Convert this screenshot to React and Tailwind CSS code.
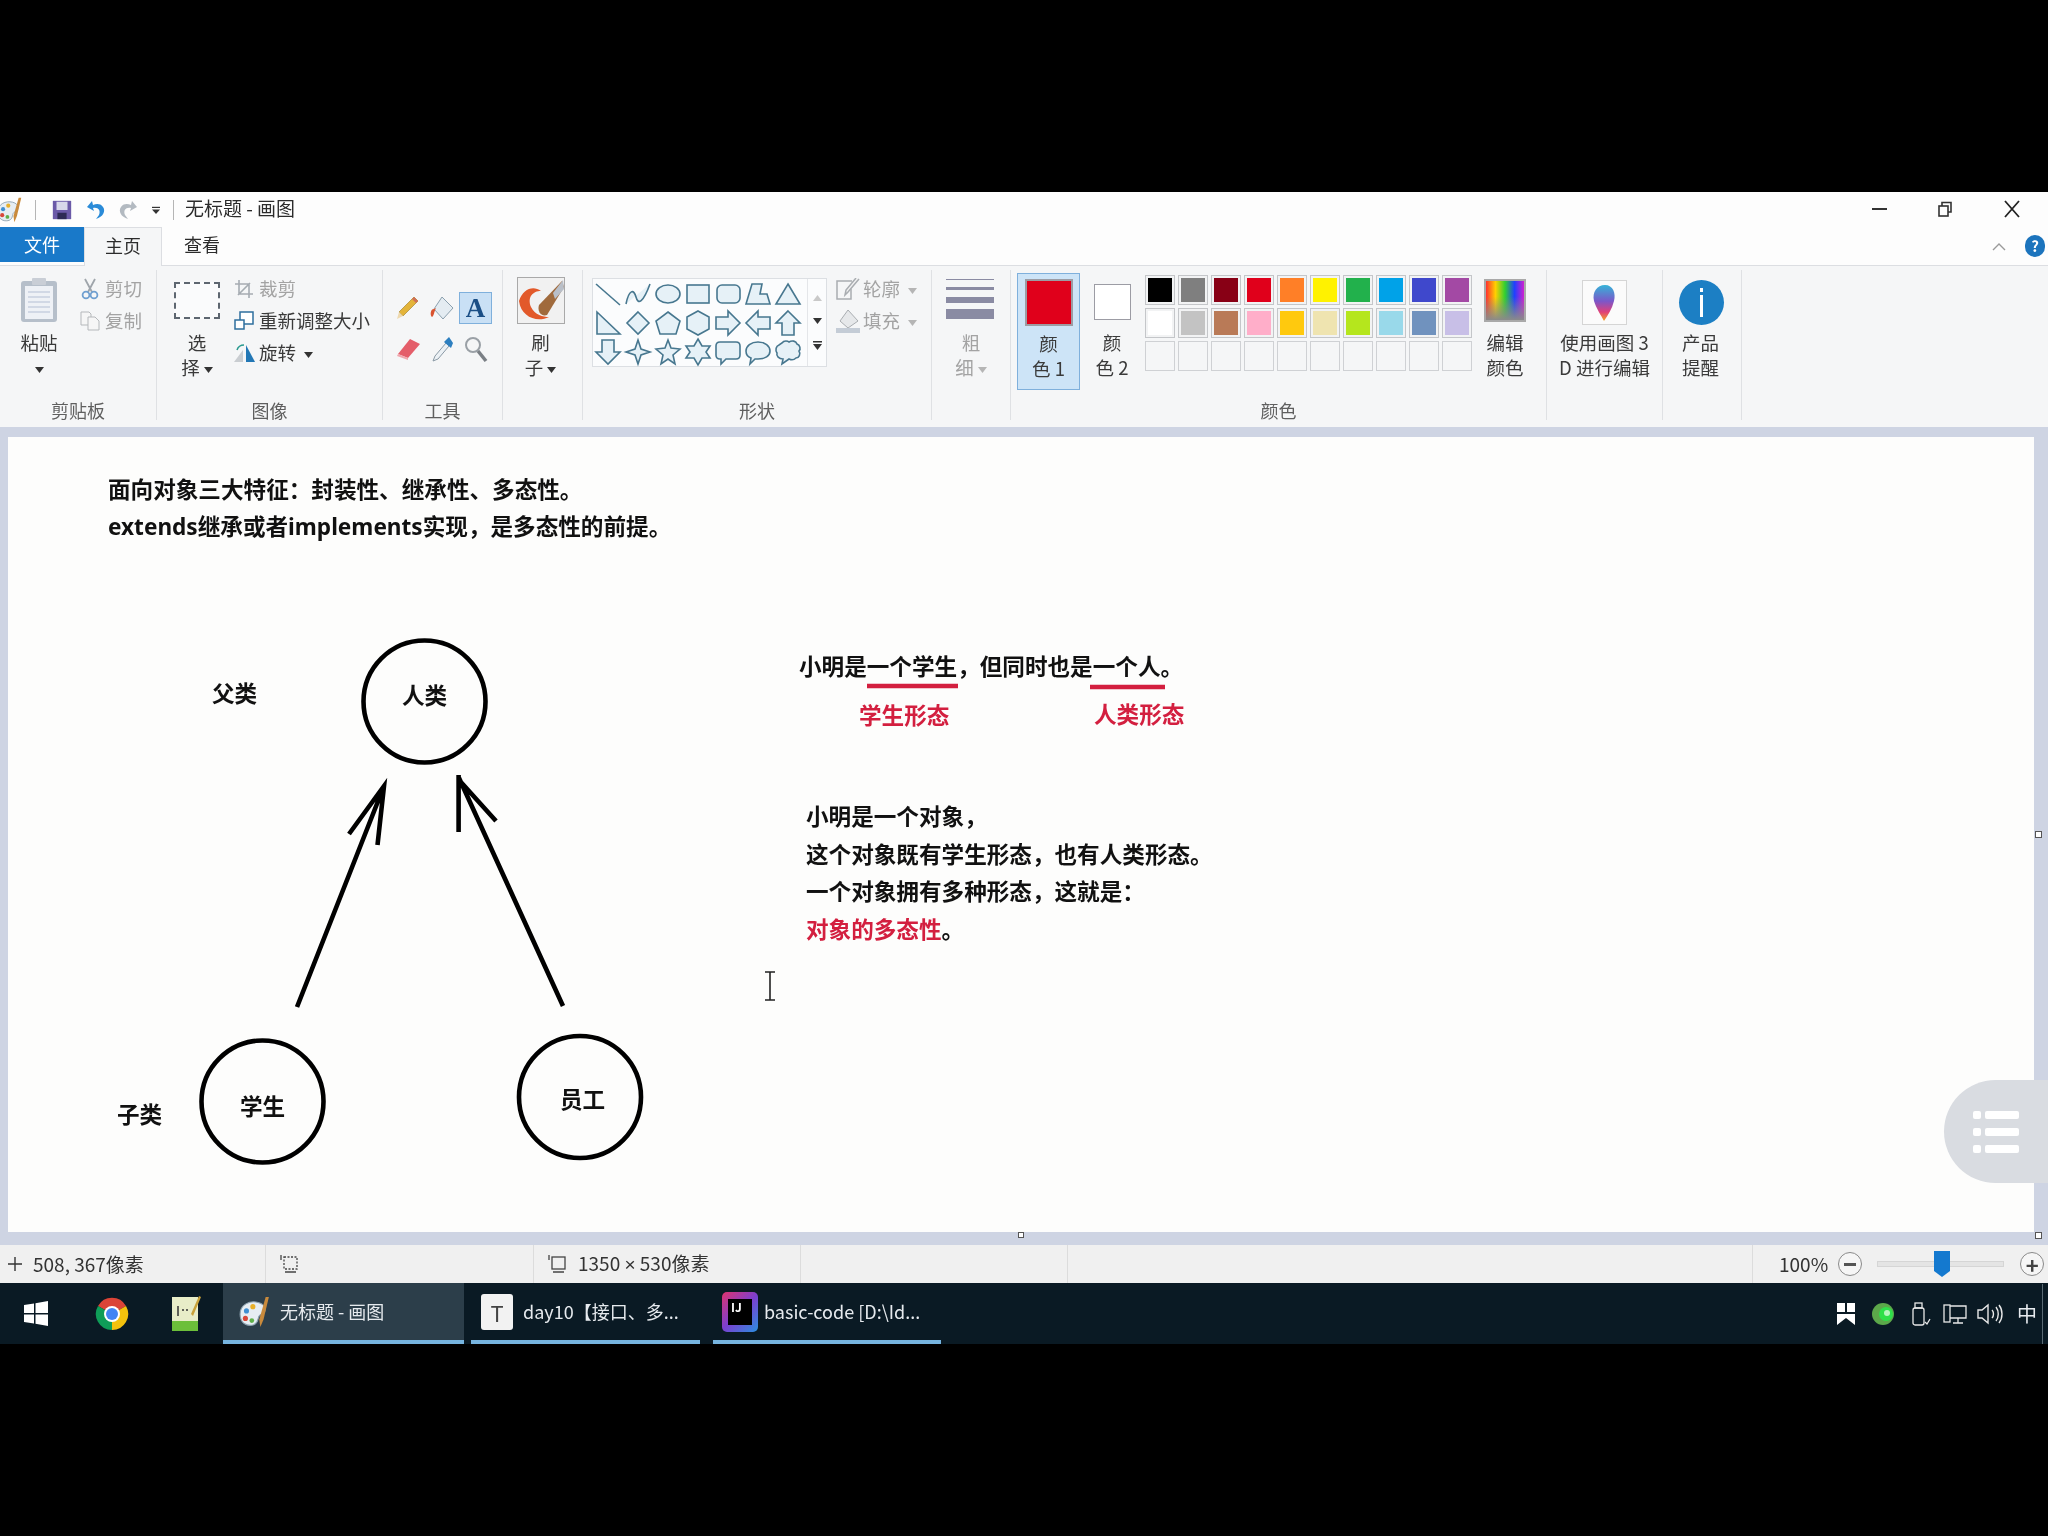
import React from 'react';

const CJK = { fontFamily: '"Noto Sans CJK SC", "Noto Sans", sans-serif' };

const PALETTE = [
  '#000000', '#7f7f7f', '#880015', '#e0001b', '#ff7f27', '#fff200', '#22b14c', '#00a2e8', '#3f48cc', '#a349a4',
  '#ffffff', '#c3c3c3', '#b97a57', '#ffaec9', '#ffc90e', '#efe4b0', '#b5e61d', '#99d9ea', '#7092be', '#c8bfe7',
];

// gallery shapes, each in a 30x30 box
const SHAPES = [
  <path d="M3 5 L27 26" />,
  <path d="M3 25 C6 10 11 10 13 18 C15 26 20 24 27 5" />,
  <ellipse cx="15" cy="15" rx="12" ry="9" />,
  <rect x="4" y="6" width="22" height="18" />,
  <rect x="4" y="6" width="23" height="18" rx="5" />,
  <path d="M3 25 L9 5 H19 L17 15 H24 L27 25 Z" />,
  <path d="M15 5 L27 25 H3 Z" />,
  <path d="M4 4 V26 H27 Z" />,
  <path d="M15 4 L26 15 L15 26 L4 15 Z" />,
  <path d="M15 4 L27 13 L23 26 H7 L3 13 Z" />,
  <path d="M15 3 L26 9 V21 L15 27 L4 21 V9 Z" />,
  <path d="M3 9 H15 V3 L27 15 L15 27 V21 H3 Z" />,
  <path d="M27 9 H15 V3 L3 15 L15 27 V21 H27 Z" />,
  <path d="M15 3 L27 15 H21 V27 H9 V15 H3 Z" />,
  <path d="M9 3 H21 V15 H27 L15 27 L3 15 H9 Z" />,
  <path d="M15 3 L18 12 L27 15 L18 18 L15 27 L12 18 L3 15 L12 12 Z" />,
  <path d="M15 3 L18 11 L27 12 L20 18 L22 27 L15 22 L8 27 L10 18 L3 12 L12 11 Z" />,
  <path d="M15 2 L19 9 L27 9 L23 15 L27 21 L19 21 L15 28 L11 21 L3 21 L7 15 L3 9 L11 9 Z" />,
  <path d="M7 5 H23 Q27 5 27 9 V18 Q27 22 23 22 H13 L8 27 V22 H7 Q3 22 3 18 V9 Q3 5 7 5 Z" />,
  <path d="M15 5 C22 5 27 9 27 14 C27 19 22 22 15 22 H12 L7 27 L8 21 C5 20 3 17 3 14 C3 9 8 5 15 5 Z" />,
  <path d="M9 6 C11 3 15 4 16 5 C19 3 23 4 24 7 C27 8 28 12 26 14 C28 17 26 21 23 21 C21 23 18 23 16 22 L9 27 L10 22 C6 22 3 19 4 16 C2 13 3 9 6 8 Z" />,
];

const Line = ({ children, muted }) => (
  <div className={`h-[25px] leading-[25px] text-[18.5px] whitespace-nowrap text-center ${muted ? 'text-[#a3a3a3]' : 'text-[#3a3a3a]'}`}>
    {children}
  </div>
);

const Caret = ({ muted, className = '' }) => (
  <svg width="9" height="6" viewBox="0 0 9 6" className={`inline-block align-middle ${className}`}>
    <path d="M0 0 H9 L4.5 6 Z" fill={muted ? '#b5b5b5' : '#333333'} />
  </svg>
);

const Group = ({ width, label, children }) => (
  <div className={`${width} h-[150px] shrink-0 border-r border-[#dfe1e4] flex flex-col`}>
    <div className="h-[130px] flex">{children}</div>
    <div className="h-[20px] leading-[20px] text-[18px] text-[#5f5f5f] text-center">{label}</div>
  </div>
);

const Slot = ({ children }) => <div className="h-[60px] flex items-center justify-center">{children}</div>;

const SmallRow = ({ icon, children, muted }) => (
  <div className="h-[32px] flex items-center">
    <div className="w-[25px] flex justify-center">{icon}</div>
    <span className={`text-[18.5px] ml-[3px] whitespace-nowrap ${muted ? 'text-[#a3a3a3]' : 'text-[#3a3a3a]'}`}>{children}</span>
  </div>
);

const PaintIcon = ({ size = 30 }) => (
  <svg width={size} height={size} viewBox="0 0 30 30">
    <path d="M1 17 C1 8 10 4 18 6 C26 8 26 15 21 17 C16 19 20 24 14 27 C7 29 1 25 1 17 Z" fill="#e6edf2" stroke="#8ba0ae" />
    <circle cx="7" cy="14" r="2.4" fill="#3f8fd2" />
    <circle cx="13" cy="10" r="2.4" fill="#e8b02a" />
    <circle cx="6" cy="21" r="2.4" fill="#d8483a" />
    <circle cx="12" cy="23" r="2.2" fill="#5fb04a" />
    <path d="M28 1 L23 22 L20 29 L19 22 L25 1 Z" fill="#c98a3c" />
  </svg>
);

const ChromeIcon = () => (
  <svg width="34" height="34" viewBox="0 0 34 34">
    <path d="M17 17 L3 9 A16 16 0 0 1 31 9 Z" fill="#db4437" />
    <path d="M17 17 L31 9 A16 16 0 0 1 17 33 Z" fill="#f4c20d" />
    <path d="M17 17 L17 33 A16 16 0 0 1 3 9 Z" fill="#0f9d58" />
    <circle cx="17" cy="17" r="8" fill="#ffffff" />
    <circle cx="17" cy="17" r="6" fill="#4285f4" />
  </svg>
);

const App = () => {
  return (
    <div className="w-[2048px] h-[1536px] bg-black flex flex-col overflow-hidden blur-[0.7px]" style={CJK}>
      <div className="h-[192px] shrink-0" />

      {/* title bar */}
      <div className="h-[35px] shrink-0 bg-[#fdfdfd] flex items-center relative">
        <div className="w-[26px] -ml-[3px] flex"><PaintIcon size={26} /></div>
        <div className="w-px h-[20px] bg-[#b5b5b5] ml-[12px]" />
        <svg width="22" height="24" viewBox="0 0 24 24" className="ml-[15px]">
          <path d="M2 2 H22 V22 H2 Z" fill="#6b5aa8" />
          <rect x="6" y="3" width="12" height="9" fill="#d8d8ea" />
          <rect x="7" y="15" width="10" height="7" fill="#2e2a55" />
        </svg>
        <svg width="22" height="24" viewBox="0 0 22 24" className="ml-[12px]">
          <path d="M7 3 L2 9 L9 13 L8 10 C13 9 16 12 14 17 L11 21 C18 19 21 13 18 9 C15 5 11 6 8 7 Z" fill="#2a8bd8" />
        </svg>
        <svg width="22" height="24" viewBox="0 0 22 24" className="ml-[10px]">
          <path d="M15 3 L20 9 L13 13 L14 10 C9 9 6 12 8 17 L11 21 C4 19 1 13 4 9 C7 5 11 6 14 7 Z" fill="#b3bac1" />
        </svg>
        <svg width="8" height="10" viewBox="0 0 10 10" className="ml-[13px]">
          <rect x="0" y="1" width="10" height="1.5" fill="#333333" />
          <path d="M0 4.5 H10 L5 10 Z" fill="#333333" />
        </svg>
        <div className="w-px h-[20px] bg-[#b5b5b5] ml-[13px]" />
        <span className="text-[19px] text-[#2b2b2b] ml-[11px] -mt-[2px]">无标题 - 画图</span>
        <div className="ml-auto flex items-center gap-[50px] pr-[27px] -mt-[2px]">
          <div className="w-[15px] h-[2px] bg-[#333333] -ml-[4px]" />
          <svg width="16" height="16" viewBox="0 0 16 16" fill="none" stroke="#333333" strokeWidth="1.6">
            <rect x="2" y="5" width="9" height="10" />
            <path d="M5 5 V1.5 H14 V11 H11" />
          </svg>
          <svg width="18" height="18" viewBox="0 0 18 18" stroke="#222222" strokeWidth="1.8">
            <path d="M2 1 L16 17 M16 1 L2 17" />
          </svg>
        </div>
      </div>

      {/* tabs */}
      <div className="h-[39px] shrink-0 bg-[#fdfdfd] border-b border-[#dcdee2] flex items-start">
        <div className="w-[84px] h-[35px] bg-[#1979c9] text-white text-[18px] leading-[35px] text-center">文件</div>
        <div className="w-[78px] h-[39px] bg-[#f5f6f7] border-x border-t border-[#dcdee2] text-[18px] leading-[35px] text-center text-[#2b2b2b]">主页</div>
        <div className="w-[80px] h-[35px] text-[18px] leading-[35px] text-center text-[#2b2b2b]">查看</div>
        <div className="ml-auto flex items-center h-[38px] pr-[3px]">
          <svg width="14" height="9" viewBox="0 0 14 9" fill="none" stroke="#9a9a9a" strokeWidth="1.4"><path d="M1 8 L7 2 L13 8" /></svg>
          <div className="w-[20px] h-[22px] ml-[19px] rounded-full bg-[#1c74bd] text-white text-[15px] font-bold leading-[22px] text-center">?</div>
        </div>
      </div>

      {/* ribbon */}
      <div className="h-[161px] shrink-0 bg-[#f5f6f7] pt-[4px] flex items-start">
        <Group width="w-[157px]" label="剪贴板">
          <div className="w-[77px] pl-[1px]">
            <Slot>
              <svg width="38" height="46" viewBox="0 0 38 46">
                <rect x="1" y="4" width="36" height="41" rx="3" fill="#b6bfca" />
                <rect x="5" y="9" width="28" height="33" fill="#eef1f6" />
                <path d="M8 15 H30 M8 20 H30 M8 25 H30 M8 30 H30 M8 35 H30" stroke="#c8cfe0" strokeWidth="1.5" />
                <rect x="12" y="1" width="14" height="7" rx="1" fill="#c9ced6" />
              </svg>
            </Slot>
            <Line>粘贴</Line>
            <Line><Caret /></Line>
          </div>
          <div className="pt-[3px]">
            <SmallRow muted icon={
              <svg width="18" height="22" viewBox="0 0 18 22" fill="none">
                <path d="M4 1 L11 14 M14 1 L7 14" stroke="#9fa5ab" strokeWidth="1.8" />
                <circle cx="5" cy="17" r="3.4" stroke="#6f9fd0" strokeWidth="1.8" />
                <circle cx="13" cy="17" r="3.4" stroke="#6f9fd0" strokeWidth="1.8" />
              </svg>
            }>剪切</SmallRow>
            <SmallRow muted icon={
              <svg width="20" height="20" viewBox="0 0 20 20" fill="#f6f6f6" stroke="#b5b8bb">
                <path d="M1 1 H9 L11 3 V14 H1 Z" />
                <path d="M8 6 H15 L19 10 V19 H8 Z" />
              </svg>
            }>复制</SmallRow>
          </div>
        </Group>

        <Group width="w-[226px]" label="图像">
          <div className="w-[74px] pl-[8px] pr-[2px]">
            <Slot>
              <div className="w-[46px] h-[37px] border-2 border-dashed border-[#5d6670] bg-[#fafbfc]" />
            </Slot>
            <Line>选</Line>
            <Line>择 <Caret /></Line>
          </div>
          <div className="pt-[3px]">
            <SmallRow muted icon={
              <svg width="18" height="18" viewBox="0 0 18 18" fill="none" stroke="#a6acb2" strokeWidth="1.6">
                <path d="M0 4 H14 V18 M4 0 V14 H18 M3 15 L15 3" />
              </svg>
            }>裁剪</SmallRow>
            <SmallRow icon={
              <svg width="20" height="20" viewBox="0 0 20 20" fill="#ffffff" stroke="#2e6f9e" strokeWidth="1.5">
                <rect x="6" y="1" width="13" height="12" />
                <rect x="1" y="9" width="9" height="9" />
              </svg>
            }>重新调整大小</SmallRow>
            <SmallRow icon={
              <svg width="22" height="20" viewBox="0 0 22 20">
                <path d="M13 2 L22 19 H13 Z" fill="#2277b5" />
                <path d="M10 7 L1 19 H10 Z" fill="#c9cdd1" />
                <path d="M4 7 C5 4 8 2 11 2" fill="none" stroke="#2a9a8f" strokeWidth="1.5" />
              </svg>
            }>旋转 <Caret className="ml-[4px]" /></SmallRow>
          </div>
        </Group>

        <Group width="w-[120px]" label="工具">
          <div className="pt-[22px] pl-[8px] grid grid-cols-[33px_33px_33px] grid-rows-[32px_49px] gap-x-[1px] justify-items-center items-center">
            <svg width="24" height="26" viewBox="0 0 24 26">
              <path d="M18 2 L22 6 L7 21 L3 17 Z" fill="#e3b43a" stroke="#a88730" strokeWidth="0.7" />
              <path d="M3 17 L7 21 L1 24 Z" fill="#eed9ae" />
              <path d="M18 2 L22 6 L20 8 L16 4 Z" fill="#d16f57" />
            </svg>
            <svg width="26" height="28" viewBox="0 0 26 28">
              <path d="M13 3 L24 14 L14 25 L5 15 Z" fill="#e4ecf2" stroke="#8ba0ae" />
              <path d="M5 15 C1 15 1 22 3 23 C5 22 5 18 7 14 Z" fill="#d9532f" />
            </svg>
            <div className="w-[33px] h-[32px] bg-[#c9e0f5] border border-[#7fb0dc] flex items-center justify-center font-['Liberation_Serif',serif] font-bold text-[27px] text-[#1b4f86]">A</div>
            <svg width="26" height="24" viewBox="0 0 26 24">
              <path d="M15 2 L25 7 L13 21 L3 17 Z" fill="#e45e6a" />
              <path d="M3 17 L13 21 L13 23 L2 19 Z" fill="#f0a7ae" />
            </svg>
            <svg width="24" height="28" viewBox="0 0 24 28">
              <path d="M16 8 L5 21 L3 26 L8 24 L19 11 Z" fill="#ecf1f5" stroke="#8b9aa6" />
              <path d="M14 7 L21 13 L23 8 L19 2 Z" fill="#2d7fc0" />
            </svg>
            <svg width="24" height="28" viewBox="0 0 24 28" fill="none">
              <circle cx="9" cy="10" r="7" stroke="#9aa0a6" strokeWidth="2" />
              <path d="M14 16 L22 26" stroke="#7a7f85" strokeWidth="3.5" />
            </svg>
          </div>
        </Group>

        <Group width="w-[80px]" label="">
          <div className="w-full pr-[4px]">
            <Slot>
              <svg width="48" height="47" viewBox="0 0 48 47">
                <rect x="0.5" y="0.5" width="47" height="46" fill="#f1f1f1" stroke="#a9a9a9" />
                <path d="M2 24 C6 12 16 8 24 14 C16 14 10 20 14 30 C18 38 26 40 32 40 C20 46 4 40 2 24 Z" fill="#e2592a" />
                <path d="M22 28 L45 4 L47 10 L30 38 C24 40 20 34 22 28 Z" fill="#a06a3c" />
                <path d="M36 16 L46 3 L47 12 L38 22 Z" fill="#b9bfc8" />
              </svg>
            </Slot>
            <Line>刷</Line>
            <Line>子 <Caret /></Line>
          </div>
        </Group>

        <Group width="w-[349px]" label="形状">
          <div className="pl-[9px] pt-[8px] flex items-start">
            <div className="w-[235px] h-[89px] flex border border-[#dcdfe3] bg-[#fbfcfd]">
              <div className="w-[214px] grid grid-cols-[repeat(7,30px)] grid-rows-3 content-center">
                {SHAPES.map((shape, i) => (
                  <svg key={i} width="30" height="30" viewBox="0 0 30 30" fill="#e6f1f7" stroke="#47778f" strokeWidth="1.6">{shape}</svg>
                ))}
              </div>
              <div className="flex-1 border-l border-[#e4e6e9] flex flex-col items-center justify-around py-[8px]">
                <svg width="9" height="6" viewBox="0 0 9 6"><path d="M0 6 H9 L4.5 0 Z" fill="#c9c9c9" /></svg>
                <Caret />
                <svg width="9" height="9" viewBox="0 0 9 9"><rect width="9" height="1.5" fill="#333333" /><path d="M0 3 H9 L4.5 9 Z" fill="#333333" /></svg>
              </div>
            </div>
            <div className="pl-[8px] -mt-[5px]">
              <SmallRow muted icon={
                <svg width="24" height="22" viewBox="0 0 24 22" fill="none" stroke="#a9adb1" strokeWidth="1.5">
                  <path d="M16 3 H1 V21 H15 V11" />
                  <path d="M23 1 L12 14 L9 17 L10 12 L20 0" fill="#f2f2f2" />
                </svg>
              }>轮廓 <Caret muted className="ml-[4px]" /></SmallRow>
              <SmallRow muted icon={
                <svg width="24" height="24" viewBox="0 0 24 24">
                  <path d="M12 1 L22 12 L12 19 L4 12 Z" fill="#e6e8ea" stroke="#a9adb1" />
                  <rect x="0" y="19" width="24" height="5" fill="#c4ccd6" />
                </svg>
              }>填充 <Caret muted className="ml-[4px]" /></SmallRow>
            </div>
          </div>
        </Group>

        <Group width="w-[79px]" label="">
          <div className="w-full">
            <div className="h-[60px] pl-[14px] pt-[9px] flex flex-col">
              <div className="w-[48px] h-px bg-[#8a8ba3]" />
              <div className="w-[48px] h-[3px] bg-[#8a8ba3] mt-[7px]" />
              <div className="w-[48px] h-[6px] bg-[#8a8ba3] mt-[7px]" />
              <div className="w-[48px] h-[10px] bg-[#8a8ba3] mt-[6px]" />
            </div>
            <Line muted>粗</Line>
            <Line muted>细 <Caret muted /></Line>
          </div>
        </Group>

        <Group width="w-[536px]" label="颜色">
          <div className="relative w-full flex">
            <div className="ml-[6px] mt-[3px] w-[63px] h-[117px] bg-[#cde4f7] border border-[#7fb0dc] flex flex-col items-center">
              <div className="w-[48px] h-[47px] mt-[5px] bg-[#e0001b] border-2 border-[#9c9ca4]" />
              <div className="h-[5px]" />
              <Line>颜</Line>
              <Line>色 1</Line>
            </div>
            <div className="ml-[13px] w-[38px] flex flex-col items-center">
              <div className="w-[37px] h-[36px] mt-[14px] bg-white border border-[#9c9ca4]" />
              <div className="h-[10px]" />
              <Line>颜</Line>
              <Line>色 2</Line>
            </div>
            <div className="ml-[14px] mt-[5px] grid grid-cols-10 gap-[3px] h-fit">
              {PALETTE.map(c => (
                <div key={c} className="w-[30px] h-[30px] border border-[#c4c6c9] p-[2px] bg-[#f2f3f4]">
                  <div className="w-full h-full" style={{ backgroundColor: c }} />
                </div>
              ))}
              {Array.from({ length: 10 }).map((_, i) => (
                <div key={i} className="w-[30px] h-[30px] border border-[#cfd1d4] bg-[#f5f6f7]" />
              ))}
            </div>
            <div className="ml-[12px] w-[42px] flex flex-col items-center">
              <div className="w-[42px] h-[43px] mt-[9px] border-2 border-[#a9a9a9] bg-[linear-gradient(to_bottom,transparent_40%,#8a8a8a),linear-gradient(to_right,#ff3030,#ffd000,#30d030,#2040ff,#d020d0)]" />
              <div className="h-[8px]" />
              <Line>编辑</Line>
              <Line>颜色</Line>
            </div>
          </div>
        </Group>

        <Group width="w-[116px]" label="">
          <div className="w-full">
            <Slot>
              <svg width="45" height="45" viewBox="0 0 45 45" className="mt-[4px]">
                <defs>
                  <linearGradient id="p3d" x1="0" y1="0" x2="0" y2="1">
                    <stop offset="0" stopColor="#35b4d8" />
                    <stop offset="0.45" stopColor="#7b57c9" />
                    <stop offset="0.75" stopColor="#e0407a" />
                    <stop offset="1" stopColor="#f5a623" />
                  </linearGradient>
                </defs>
                <rect x="0.5" y="0.5" width="44" height="44" fill="#fbfbfb" stroke="#d5d5d5" />
                <path d="M23 5 C31 5 34 13 32 21 C30 29 26 35 22 41 C19 35 14 28 12 21 C10 12 15 5 23 5 Z" fill="url(#p3d)" />
              </svg>
            </Slot>
            <Line>使用画图 3</Line>
            <Line>D 进行编辑</Line>
          </div>
        </Group>

        <Group width="w-[79px]" label="">
          <div className="w-full pr-[3px]">
            <Slot>
              <div className="w-[45px] h-[45px] rounded-full bg-[#1c7fc4] flex flex-col items-center justify-center gap-[3px] mt-[4px] ml-[2px]">
                <div className="w-[3px] h-[4px] bg-white" />
                <div className="w-[3px] h-[22px] bg-white" />
              </div>
            </Slot>
            <Line>产品</Line>
            <Line>提醒</Line>
          </div>
        </Group>
      </div>

      {/* workspace */}
      <div className="h-[818px] shrink-0 bg-[#ced4e3] pl-[8px] pt-[10px] relative">
        <div className="w-[2026px] h-[795px] bg-[#fdfdfc] relative font-bold text-[22.6px] text-[#111111]">
          <svg width="2026" height="795" viewBox="8 437 2026 795" className="absolute inset-0" fill="none" stroke="#000000" strokeWidth="4.6">
            <circle cx="424.5" cy="701.5" r="61" />
            <circle cx="262.5" cy="1101.5" r="61" />
            <circle cx="580" cy="1097" r="61" />
            <path d="M297 1007 L384 786 M349 834 L384 786 L377.5 845" />
            <path d="M563 1006 L459 778 M458.6 832 L458.6 775 M496 821 L459 780" />
            <path d="M867 686 H958 M1090 687 H1165" stroke="#d31f3f" />
          </svg>

          <div className="absolute left-[100px] top-[33px] leading-[38px] whitespace-nowrap">
            <div>面向对象三大特征：封装性、继承性、多态性。</div>
            <div style={{ fontFamily: '"Noto Sans", "Noto Sans CJK SC", sans-serif' }}>extends继承或者implements实现，是多态性的前提。</div>
          </div>

          <div className="absolute left-[791px] top-[213px] leading-[32px] whitespace-nowrap">小明是一个学生，但同时也是一个人。</div>
          <div className="absolute left-[851px] top-[262px] leading-[32px] text-[#d31f3f]">学生形态</div>
          <div className="absolute left-[1086px] top-[261px] leading-[32px] text-[#d31f3f]">人类形态</div>

          <div className="absolute left-[798px] top-[360px] leading-[37.5px] whitespace-nowrap">
            <div>小明是一个对象，</div>
            <div>这个对象既有学生形态，也有人类形态。</div>
            <div>一个对象拥有多种形态，这就是：</div>
            <div><span className="text-[#d31f3f]">对象的多态性</span>。</div>
          </div>

          <div className="absolute left-[204px] top-[240px] leading-[32px]">父类</div>
          <div className="absolute left-[394px] top-[242px] leading-[32px]">人类</div>
          <div className="absolute left-[109px] top-[661px] leading-[32px]">子类</div>
          <div className="absolute left-[232px] top-[653px] leading-[32px]">学生</div>
          <div className="absolute left-[552px] top-[646px] leading-[32px]">员工</div>

          <svg width="12" height="30" viewBox="0 0 12 30" className="absolute left-[756px] top-[534px]" fill="none" stroke="#222222" strokeWidth="1.6">
            <path d="M1 1 H11 M6 1 V29 M1 29 H11" />
          </svg>
        </div>

        <div className="absolute left-[1018px] top-[805px] w-[6px] h-[6px] bg-white border border-[#555555]" />
        <div className="absolute left-[2035px] top-[404px] w-[7px] h-[7px] bg-white border border-[#555555]" />
        <div className="absolute left-[2035px] top-[805px] w-[7px] h-[7px] bg-white border border-[#555555]" />

        <div className="absolute left-[1944px] top-[653px] w-[104px] h-[103px] rounded-l-[52px] bg-[#d9dce1] pl-[29px] pt-[31px] flex flex-col gap-[9px]">
          {[0, 1, 2].map(i => (
            <div key={i} className="flex gap-[4px]">
              <div className="w-[8px] h-[8px] bg-white rounded-[2px]" />
              <div className="w-[34px] h-[8px] bg-white rounded-[2px]" />
            </div>
          ))}
        </div>
      </div>

      {/* status bar */}
      <div className="h-[38px] shrink-0 bg-[#f0f0f0] flex items-center text-[19px] text-[#333333]">
        <div className="w-[266px] h-full border-r border-[#dcdcdc] flex items-center pl-[7px] gap-[10px]">
          <svg width="16" height="16" viewBox="0 0 16 16" stroke="#333333" strokeWidth="1.4"><path d="M8 1 V15 M1 8 H15" /></svg>
          <span>508, 367像素</span>
        </div>
        <div className="w-[268px] h-full border-r border-[#dcdcdc] flex items-center pl-[14px]">
          <svg width="20" height="20" viewBox="0 0 20 20" fill="none" stroke="#444444" strokeWidth="1.3">
            <rect x="4" y="3" width="13" height="12" strokeDasharray="2 1.5" />
            <path d="M1 1 V6 M5 18 H16" />
          </svg>
        </div>
        <div className="w-[267px] h-full border-r border-[#dcdcdc] flex items-center pl-[14px] gap-[10px]">
          <svg width="20" height="20" viewBox="0 0 20 20" fill="none" stroke="#444444" strokeWidth="1.3">
            <rect x="4" y="3" width="13" height="12" />
            <path d="M1 1 V6 M5 18 H16" />
          </svg>
          <span>1350 <span className="font-['Liberation_Sans',sans-serif]">×</span> 530像素</span>
        </div>
        <div className="w-[267px] h-full border-r border-[#dcdcdc]" />
        <div className="w-[685px] h-full border-r border-[#dcdcdc]" />
        <div className="flex-1 flex items-center">
          <span className="text-[19px] ml-[26px]">100%</span>
          <div className="w-[24px] h-[24px] ml-[10px] rounded-full border border-[#8a8a8a] bg-[#f6f6f6] flex items-center justify-center">
            <div className="w-[12px] h-[3px] bg-[#555555]" />
          </div>
          <div className="w-[127px] h-[6px] ml-[15px] bg-[#e4e4e4] border border-[#d5d5d5] relative">
            <svg width="16" height="26" viewBox="0 0 16 26" className="absolute left-[56px] -top-[11px]">
              <path d="M0 0 H16 V20 L8 26 L0 20 Z" fill="#1479cf" />
            </svg>
          </div>
          <div className="w-[24px] h-[24px] ml-[16px] rounded-full border border-[#8a8a8a] bg-[#f6f6f6] flex items-center justify-center text-[#444444] text-[22px] font-bold leading-none">+</div>
        </div>
      </div>

      {/* taskbar */}
      <div className="h-[61px] shrink-0 bg-[#0a1a24] flex items-stretch text-[18px] text-[#e6eaee]">
        <div className="w-[223px] flex items-center">
          <svg width="24" height="25" viewBox="0 0 24 25" className="ml-[24px]" fill="#ffffff">
            <path d="M0 4 L10 2.5 V12 H0 Z M11.5 2.3 L24 0 V12 H11.5 Z M0 13.5 H10 V22.5 L0 21 Z M11.5 13.5 H24 V25 L11.5 22.8 Z" />
          </svg>
          <div className="ml-[47px]"><ChromeIcon /></div>
          <svg width="32" height="36" viewBox="0 0 32 36" className="ml-[41px]">
            <rect x="2" y="1" width="26" height="34" fill="#e8edc8" />
            <rect x="2" y="25" width="26" height="10" fill="#6cbf3a" />
            <path d="M8 10 V20 M12 14 H14 M16 14 H18" stroke="#333333" strokeWidth="1.5" />
            <path d="M31 1 L23 20 L21 18 L29 0 Z" fill="#c9a23a" />
          </svg>
        </div>
        <div className="w-[241px] bg-[#2c3e4a] border-b-[4px] border-[#76b4e0] flex items-center pl-[16px] gap-[9px]">
          <PaintIcon size={32} />
          <span>无标题 - 画图</span>
        </div>
        <div className="w-[229px] ml-[7px] border-b-[4px] border-[#76b4e0] flex items-center pl-[10px] gap-[10px]">
          <div className="w-[32px] h-[36px] bg-[#f2f2f2] rounded-[3px] text-[#444444] text-[22px] text-center leading-[36px]">T</div>
          <span className="whitespace-nowrap">day10【接口、多...</span>
        </div>
        <div className="w-[228px] ml-[13px] border-b-[4px] border-[#76b4e0] flex items-center pl-[9px] gap-[6px]">
          <div className="w-[36px] h-[40px] rounded-[5px] bg-[linear-gradient(135deg,#e0336e,#7b3fd0,#2a8fe0)] flex items-center justify-center">
            <div className="w-[24px] h-[26px] bg-black text-white text-[12px] font-bold leading-[16px] pl-[3px]">IJ</div>
          </div>
          <span className="whitespace-nowrap">basic-code [D:\Id...</span>
        </div>
        <div className="flex-1 flex items-center justify-end pr-[9px]">
          <svg width="18" height="22" viewBox="0 0 18 22" fill="#ffffff">
            <rect x="0" y="0" width="8" height="9" />
            <rect x="10" y="0" width="8" height="9" />
            <path d="M0 11 H18 V22 L9 15 L0 22 Z" />
          </svg>
          <svg width="22" height="22" viewBox="0 0 22 22" className="ml-[17px]">
            <circle cx="11" cy="11" r="11" fill="#5ca84a" />
            <circle cx="14" cy="11" r="7" fill="#2fe04a" />
            <circle cx="15" cy="10" r="3" fill="#b6f7bf" />
          </svg>
          <svg width="20" height="24" viewBox="0 0 20 24" fill="none" stroke="#e8e8e8" strokeWidth="1.3" className="ml-[17px]">
            <rect x="2" y="6" width="11" height="17" rx="2" />
            <rect x="4" y="1" width="7" height="5" />
            <path d="M14 20 L16 22 L19 17" />
          </svg>
          <svg width="24" height="20" viewBox="0 0 24 20" fill="none" stroke="#e8e8e8" strokeWidth="1.3" className="ml-[12px]">
            <path d="M7 2 H23 V14 H7 M15 14 V19 M10 19 H20" />
            <rect x="1" y="1" width="6" height="17" />
          </svg>
          <svg width="26" height="22" viewBox="0 0 26 22" fill="none" stroke="#e8e8e8" strokeWidth="1.4" className="ml-[10px]">
            <path d="M1 7 H5 L11 2 V20 L5 15 H1 Z" />
            <path d="M15 7 C17 9 17 13 15 15 M19 4 C22 8 22 14 19 18 M22 2 C26 7 26 15 22 20" />
          </svg>
          <span className="ml-[14px] text-[20px] w-[18px]">中</span>
          <div className="w-px h-[60px] bg-[#5a6a74] ml-[7px] -mr-[4px]" />
        </div>
      </div>

      <div className="flex-1" />
    </div>
  );
};

export default App;
